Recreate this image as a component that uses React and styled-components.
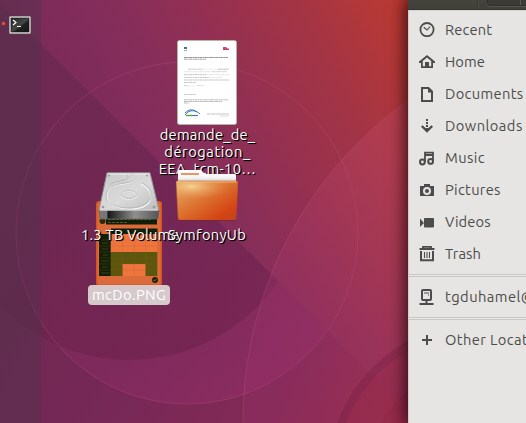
import React from 'react';
import styled, { createGlobalStyle } from 'styled-components';

const Global = createGlobalStyle`
  * { box-sizing: border-box; }
  body { margin: 0; overflow: hidden; }
`;

const Desktop = styled.main`
  position: relative;
  display: flex;
  width: 526px;
  height: 423px;
  overflow: hidden;
  font-family: Ubuntu, 'Noto Sans', sans-serif;
  font-size: 14.7px;
  background: #762953;
`;

const Wallpaper = styled.svg`
  position: absolute;
  inset: 0;
`;

const Launcher = styled.nav`
  position: relative;
  display: flex;
  align-items: flex-start;
  gap: 4px;
  width: 41px;
  height: 100%;
  padding: 16px 0 0 2px;
  background: rgba(76, 52, 76, 0.4);
`;

const RunningDot = styled.i`
  width: 3px;
  height: 3px;
  margin-top: 6px;
  border-radius: 50%;
  background: #f05423;
  box-shadow: 0 0 1px #f05423;
`;

const DesktopItem = styled.figure`
  position: absolute;
  left: ${(p) => p.$x}px;
  top: ${(p) => p.$y}px;
  width: 110px;
  margin: 0;
  display: flex;
  flex-direction: column;
  align-items: center;
`;

const ItemLabel = styled.figcaption`
  display: flex;
  flex-direction: column;
  align-items: center;
  margin-top: ${(p) => p.$gap}px;
  padding-left: ${(p) => p.$indent || 0}px;
  line-height: 17px;
  color: #fff;
  white-space: nowrap;
  text-shadow: 1px 1px 1px #000, 1px 1px 0 #000;
`;

const SelectedLabel = styled(ItemLabel)`
  width: 82px;
  height: 20px;
  line-height: 20px;
  border-radius: 4px;
  background: #d5c9cc;
  text-shadow: none;
`;

const Text = styled.span`
  letter-spacing: ${(p) => p.$track || 0}px;
`;

const FileWindow = styled.section`
  position: absolute;
  left: 408px;
  top: 0;
  width: 118px;
  height: 423px;
  display: flex;
  flex-direction: column;
  box-shadow: 0 0 15px 3px rgba(20, 0, 5, 0.75);
`;

const HeaderBar = styled.header`
  display: flex;
  justify-content: flex-end;
  height: 10px;
  background: linear-gradient(#45443f, #403f3a);
  border-bottom: 1px solid #363530;
  overflow: hidden;
`;

const HeaderDivider = styled.i`
  width: 2px;
  margin-right: 8px;
  height: 8px;
  border-left: 1px solid #393833;
  border-right: 1px solid #4b4a44;
`;

const PathBar = styled.div`
  width: 39px;
  height: 6px;
  border: solid #2f2e2a;
  border-width: 0 0 1px 1px;
  border-radius: 0 0 0 4px;
  background: #3c3b37;
  box-shadow: 0 1px #56554d;
  padding-left: 32px;
`;

const PathSplit = styled.i`
  display: block;
  width: 1px;
  height: 5px;
  background: #5a5952;
`;

const Sidebar = styled.nav`
  flex: 1;
  padding-top: 4px;
  background: #e6e5e3;
  border-left: 1px solid #cfcdca;
  box-shadow: inset 0 1px #d6d5d2;
  overflow: hidden;
`;

const Place = styled.div`
  display: flex;
  align-items: center;
  height: 32px;
  padding-left: 10px;
  color: #4c4c4c;
  white-space: nowrap;
`;

const PlaceName = styled(Text)`
  padding-bottom: 2px;
`;

const PlaceIcon = styled.svg`
  flex: none;
  width: 16px;
  height: 16px;
  margin-right: 10px;
`;

const Separator = styled.hr`
  height: 3px;
  margin: 4px 0;
  border: solid #c9c7c4;
  border-width: 1px 0;
  background: #eae9e7;
`;

const glyphs = {
  recent: (
    <g fill="none" stroke="#4c4c4c">
      <circle cx="8" cy="7.6" r="6.6" strokeWidth="1.8" />
      <path d="M4.7 5.3 8 8 11 4.6" strokeWidth="1.1" />
    </g>
  ),
  home: (
    <path
      fill="#4c4c4c"
      fillRule="evenodd"
      d="M8 1 0 7.5V9h2v5h12V9h2V7.5L8 1Zm0 2.4L12.2 7v5.2H10V8H6v4.2H3.8V7L8 3.4Z"
    />
  ),
  documents: (
    <g>
      <path d="M3 2h6.5L13 5.5V15H3Z" fill="none" stroke="#4c4c4c" strokeWidth="2" />
      <path d="M9 2v4.5h4.5Z" fill="#4c4c4c" />
    </g>
  ),
  downloads: (
    <g fill="none" stroke="#4c4c4c" strokeWidth="2">
      <path d="M8 1v2M8 4v2M8 7v2M8 10v3" />
      <path d="m2.8 8 5.2 5 5.2-5" strokeWidth="2.4" />
    </g>
  ),
  music: (
    <g fill="none" stroke="#4c4c4c" strokeWidth="2">
      <circle cx="3.4" cy="12" r="2.4" />
      <circle cx="11.6" cy="11.4" r="2.4" />
      <path d="M6 12V2.6h8v9M6 5h8" strokeWidth="1.8" />
    </g>
  ),
  pictures: (
    <path
      fill="#4c4c4c"
      fillRule="evenodd"
      d="M5 2h6v2h4v10H1V4h4ZM8 5a4 4 0 1 0 0 8 4 4 0 0 0 0-8Zm0 2a2 2 0 1 1 0 4 2 2 0 0 1 0-4Z"
    />
  ),
  videos: (
    <g fill="#4c4c4c">
      <path d="M1 4.5 5 9l-4 4Z" />
      <rect x="5" y="4" width="10" height="9.5" rx="1" />
    </g>
  ),
  trash: (
    <g fill="none" stroke="#4c4c4c">
      <path d="M2 5v9.2h12V5" strokeWidth="2" />
      <path d="M0.5 3h15M4 2V.8h8V2" strokeWidth="1.8" />
      <path d="M5.5 6v6M8 6v6M10.5 6v6" strokeWidth="1.1" />
    </g>
  ),
  server: (
    <g fill="none" stroke="#4c4c4c">
      <rect x="3" y="1" width="9" height="10" rx="1" strokeWidth="2" />
      <path d="M7.5 11v4M.5 15h14" strokeWidth="2" />
      <path d="M5 4h5M9 6h1" strokeWidth="1" />
    </g>
  ),
  add: <path d="M8 3v10M3 8h10" stroke="#4c4c4c" strokeWidth="2" />,
};

const groups = [
  [
    ['recent', 'Recent', 0.15],
    ['home', 'Home', 0.1],
    ['documents', 'Documents', 0.33],
    ['downloads', 'Downloads', 0.45],
    ['music', 'Music', 0.4],
    ['pictures', 'Pictures', 0.3],
    ['videos', 'Videos', 0.1],
    ['trash', 'Trash', 0.1],
  ],
  [['server', 'tgduhamel@', 0.45]],
  [['add', 'Other Locations', 0.4]],
];

function Backdrop() {
  return (
    <Wallpaper width="526" height="423" viewBox="0 0 526 423">
      <defs>
        <linearGradient id="base" gradientUnits="userSpaceOnUse" x1="20" y1="250" x2="420" y2="40">
          <stop offset="0" stopColor="#74274f" />
          <stop offset="0.32" stopColor="#7f2c5b" />
          <stop offset="0.45" stopColor="#862e5a" />
          <stop offset="0.6" stopColor="#933052" />
          <stop offset="0.78" stopColor="#a23446" />
          <stop offset="1" stopColor="#bb3a32" />
        </linearGradient>
        <linearGradient id="lower" gradientUnits="userSpaceOnUse" x1="30" y1="200" x2="430" y2="400">
          <stop offset="0" stopColor="#6f2952" />
          <stop offset="0.35" stopColor="#762856" />
          <stop offset="0.7" stopColor="#832a56" />
          <stop offset="1" stopColor="#9c2e45" />
        </linearGradient>
        <linearGradient id="disc" gradientUnits="userSpaceOnUse" x1="120" y1="120" x2="170" y2="360">
          <stop offset="0" stopColor="#5e1d48" stopOpacity="0" />
          <stop offset="1" stopColor="#661f43" stopOpacity="0.45" />
        </linearGradient>
        <linearGradient id="halo" gradientUnits="userSpaceOnUse" x1="150" y1="180" x2="220" y2="400">
          <stop offset="0" stopColor="#a33277" stopOpacity="0" />
          <stop offset="1" stopColor="#a33277" stopOpacity="0.28" />
        </linearGradient>
        <linearGradient id="arc" gradientUnits="userSpaceOnUse" x1="245" y1="330" x2="410" y2="180">
          <stop offset="0" stopColor="#a53572" stopOpacity="0.18" />
          <stop offset="1" stopColor="#bb4864" stopOpacity="0.38" />
        </linearGradient>
        <clipPath id="underDiagonal">
          <path d="M0 3 420 423H0Z" />
        </clipPath>
      </defs>
      <rect width="526" height="423" fill="url(#base)" />
      <path d="M0 3 420 423H0Z" fill="url(#lower)" />
      <circle cx="187" cy="233" r="171" fill="url(#halo)" clipPath="url(#underDiagonal)" />
      <circle cx="129" cy="179" r="181" fill="url(#disc)" clipPath="url(#underDiagonal)" />
      <circle cx="187" cy="233" r="171" fill="none" stroke="#cf548c" strokeOpacity="0.26" />
      <circle cx="637" cy="421" r="394" fill="url(#arc)" stroke="#d45c8a" strokeOpacity="0.25" />
      <circle cx="480" cy="475" r="152" fill="#741d3d" fillOpacity="0.32" />
      <circle cx="480" cy="475" r="144" fill="#b83a59" fillOpacity="0.24" />
      <circle cx="480" cy="475" r="111" fill="#8f2040" fillOpacity="0.2" />
    </Wallpaper>
  );
}

function TerminalIcon() {
  return (
    <svg width="22" height="18" viewBox="0 0 22 18">
      <defs>
        <linearGradient id="screen" x1="0" y1="0" x2="1" y2="1">
          <stop offset="0" stopColor="#252525" />
          <stop offset="0.5" stopColor="#454745" />
          <stop offset="0.6" stopColor="#202220" />
          <stop offset="1" stopColor="#171817" />
        </linearGradient>
      </defs>
      <rect x=".5" y=".5" width="21" height="17" rx="1" fill="#e5e4e2" stroke="#a9a4a5" />
      <rect x="2" y="2" width="18" height="14" fill="url(#screen)" stroke="#111" strokeWidth=".6" />
      <path d="m4 4 3 2.5L4 9M8 10.5h4" fill="none" stroke="#fff" strokeWidth="1.2" />
    </svg>
  );
}

const documentLines = [
  [7, 17.5, 44, 0.8], [7, 19.2, 22, 0.7], [11, 29.2, 15, 0.4], [41, 29.2, 11, 0.5],
  [27, 29.2, 14, 0.15], [7, 31.7, 27, 0.2], [35, 31.7, 15, 0.35], [7, 34.7, 22, 0.45],
  [29, 34.7, 23, 0.2], [7, 37.4, 25, 0.45], [32, 37.4, 13, 0.2], [7, 40, 45, 0.45],
  [7, 42.6, 12, 0.45], [7, 45.6, 3, 0.4], [10, 46, 9, 0.15], [20, 45.6, 7, 0.3],
  [7, 54.5, 12, 0.4], [7, 59.8, 44, 0.5], [7, 61.5, 38, 0.5], [7, 63, 5, 0.5],
  [30, 74, 22, 0.5], [43, 76, 9, 0.3],
];

function DocumentIcon() {
  return (
    <svg width="60" height="85" viewBox="0 0 60 85">
      <rect x=".5" y=".5" width="59" height="84" rx="2" fill="#fff" stroke="#b7b2a9" />
      <path d="M7 7h3v2H7Z" fill="#3f6ea5" />
      <path d="M7 10.5h3" stroke="#9aabba" fill="none" />
      <path d="M46 7.5h4v1h2v1.5h-6Z" fill="#d63555" />
      <path d="M46 7h3v2h-3Z" fill="#a456a1" />
      {documentLines.map(([x, y, w, o], i) => (
        <path key={i} d={`M${x} ${y}h${w}`} stroke="#303030" strokeWidth="0.7" strokeDasharray="3 .4 1.5 .3" opacity={o * 0.9} />
      ))}
      <path d="M8 75c4-6 11-5 15-1M8 73c4-4 8-4 12-1" fill="none" stroke="#3876b5" strokeWidth="1" />
      <path d="M9 75.5h6" stroke="#58a33e" strokeWidth="1.4" />
      <path d="M15 75.5h6" stroke="#3876b5" strokeWidth="1.1" />
    </svg>
  );
}

function ScreenshotIcon() {
  return (
    <svg width="66" height="85" viewBox="0 0 66 85">
      <rect x=".75" y=".75" width="64.5" height="83.5" rx="2.5" fill="#db6b3b" stroke="#d95420" strokeWidth="1.5" />
      <path d="M10 17h51v6.5H10Z" fill="#102008" />
      <circle cx="6.5" cy="20" r="3" fill="#282b12" />
      <path d="M12 18.5h43M12 21.5h20" stroke="#735a27" strokeDasharray="3 1" strokeWidth=".8" />
      <path d="M15 27.5h46.5V33H15v42H3V33h12Z" fill="#102008" />
      <rect x="14.7" y="33" width="46.6" height="18" fill="#f0753d" />
      <rect x="14.7" y="51" width="46.6" height="24" fill="#5c570c" />
      <rect x="26.5" y="63" width="23" height="12" fill="#f0753d" />
      <path d="M26.5 33v42M38.3 33v42M49.7 33v42M15 39h46M15 45h46M15 57h46M15 63h46M15 69h46M3 39h12M3 45h12M3 51h12M3 57h12M3 63h12M3 69h12" stroke="#a15b20" strokeOpacity=".4" strokeWidth=".6" />
      <path d="M6 42h6M6 48h6M7 54h5M5 60h8M6 66h6M5 72h9" stroke="#8a6332" strokeOpacity=".7" strokeWidth=".6" />
      <circle cx="59" cy="79" r="3" fill="#19240b" />
      <path d="m57.5 79 1 1 2-2" fill="none" stroke="#ae5e30" />
    </svg>
  );
}

function DriveIcon() {
  return (
    <svg width="64" height="48" viewBox="0 0 64 48">
      <defs>
        <linearGradient id="lid" x1="0" y1="0" x2="1" y2="1">
          <stop stopColor="#c8c8c8" />
          <stop offset=".55" stopColor="#dadada" />
          <stop offset="1" stopColor="#bcbcbc" />
        </linearGradient>
        <linearGradient id="edge">
          <stop stopColor="#777" />
          <stop offset=".13" stopColor="#777" />
          <stop offset=".15" stopColor="#171717" />
          <stop offset=".6" stopColor="#909090" />
          <stop offset="1" stopColor="#555" />
        </linearGradient>
      </defs>
      <path d="M2 38h60l-1 9H3Z" fill="url(#edge)" stroke="#666" strokeWidth=".8" />
      <path d="M10 .8h43L62 38H2Z" fill="url(#lid)" stroke="#8f8f8f" />
      <path d="M11 2h41M3 38h58" stroke="#f2f2f2" />
      <g fill="none" stroke="#f3f3f3">
        <path d="M35 3c8 4 1 8-8 9-13 1-17 6-17 12 0 8 10 13 23 13s22-5 21-14c-1-6-6-9-10-11" strokeWidth="1.2" />
        <ellipse cx="32" cy="23" rx="7.5" ry="4.2" strokeWidth="1.3" />
      </g>
      <g fill="none" stroke="#aaa" strokeWidth=".7">
        <path d="M12 14c2-4 8-4 15-6 4-1 5-3 3-5M34 2c9 5 3 8-6 9-12 1-18 6-19 12-1 8 10 13 23 13s24-6 22-15c-1-5-5-8-9-10" />
        <ellipse cx="32" cy="22.5" rx="7.5" ry="4" />
      </g>
      <g fill="#999">
        <circle cx="12" cy="3.5" r="1" />
        <circle cx="50" cy="3.5" r="1" />
        <circle cx="6" cy="35" r="1.3" />
        <circle cx="57" cy="35" r="1.3" />
      </g>
    </svg>
  );
}

function FolderIcon() {
  return (
    <svg width="62" height="52" viewBox="0 0 62 52">
      <defs>
        <linearGradient id="folder" x1="0" y1="0" x2="1" y2="1">
          <stop stopColor="#e8ad68" />
          <stop offset=".5" stopColor="#db6d2c" />
          <stop offset=".8" stopColor="#d54514" />
          <stop offset="1" stopColor="#bf4318" />
        </linearGradient>
        <radialGradient id="glow" cx=".24" cy=".2" r=".65">
          <stop stopColor="#f3d28e" />
          <stop offset="1" stopColor="#e88949" stopOpacity="0" />
        </radialGradient>
        <linearGradient id="paper" x2="0" y2="1">
          <stop stopColor="#fff" />
          <stop offset=".6" stopColor="#f4f4f4" />
          <stop offset="1" stopColor="#bdbdbd" />
        </linearGradient>
      </defs>
      <path d="M2 12V2q0-2 2-2h20q2 0 4 4h31q1 0 1 2v7Z" fill="url(#paper)" />
      <path d="M5 4h18" stroke="#ed9467" strokeWidth="2" />
      <path d="M0 12q0-1 1-1h60q1 0 1 2l-2 34q0 3-2 3H4q-2 0-2-3Z" fill="url(#folder)" stroke="#bd572b" strokeWidth=".5" />
      <path d="M1 12h60l-1 11C42 23 21 29 1 34Z" fill="url(#glow)" />
      <path d="M1.5 12h59" stroke="#f1bd7d" />
      <path d="M3 50.5h56" stroke="#702033" strokeOpacity=".7" />
    </svg>
  );
}

export default function App() {
  return (
    <>
      <Global />
      <Desktop>
        <Backdrop />
        <Launcher>
          <RunningDot />
          <TerminalIcon />
        </Launcher>
        <DesktopItem $x={152} $y={40}>
          <DocumentIcon />
          <ItemLabel $gap={1} $indent={1}>
            <Text $track={0.2}>demande_de_</Text>
            <Text $track={0.55}>dérogation_</Text>
            <Text $track={0.3}>EEA_tcm-10…</Text>
          </ItemLabel>
        </DesktopItem>
        <DesktopItem $x={74} $y={201}>
          <ScreenshotIcon />
          <SelectedLabel $gap={-1}>
            <Text $track={0.4}>mcDo.PNG</Text>
          </SelectedLabel>
        </DesktopItem>
        <DesktopItem $x={74} $y={172}>
          <DriveIcon />
          <ItemLabel $gap={6} $indent={2}>
            <Text $track={0.25}>1.3 TB Volume</Text>
          </ItemLabel>
        </DesktopItem>
        <DesktopItem $x={152} $y={170}>
          <FolderIcon />
          <ItemLabel $gap={4}>
            <Text $track={0.3}>SymfonyUb</Text>
          </ItemLabel>
        </DesktopItem>
        <FileWindow>
          <HeaderBar>
            <HeaderDivider />
            <PathBar>
              <PathSplit />
            </PathBar>
          </HeaderBar>
          <Sidebar>
            {groups.map((places, index) => (
              <React.Fragment key={index}>
                {index > 0 && <Separator />}
                {places.map(([icon, name, track]) => (
                  <Place key={name}>
                    <PlaceIcon viewBox="0 0 16 16">{glyphs[icon]}</PlaceIcon>
                    <PlaceName $track={track}>{name}</PlaceName>
                  </Place>
                ))}
              </React.Fragment>
            ))}
          </Sidebar>
        </FileWindow>
      </Desktop>
    </>
  );
}
